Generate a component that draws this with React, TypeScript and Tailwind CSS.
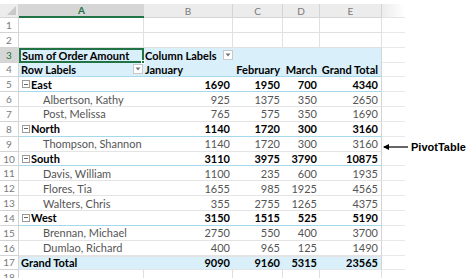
import * as React from "react";

type Kind = "blank" | "head1" | "head2" | "region" | "detail" | "total";

const rows: { n: number; kind: Kind; label?: string; vals?: string[] }[] = [
  { n: 1, kind: "blank" },
  { n: 2, kind: "blank" },
  { n: 3, kind: "head1" },
  { n: 4, kind: "head2", label: "Row Labels", vals: ["January", "February", "March", "Grand Total"] },
  { n: 5, kind: "region", label: "East", vals: ["1690", "1950", "700", "4340"] },
  { n: 6, kind: "detail", label: "Albertson, Kathy", vals: ["925", "1375", "350", "2650"] },
  { n: 7, kind: "detail", label: "Post, Melissa", vals: ["765", "575", "350", "1690"] },
  { n: 8, kind: "region", label: "North", vals: ["1140", "1720", "300", "3160"] },
  { n: 9, kind: "detail", label: "Thompson, Shannon", vals: ["1140", "1720", "300", "3160"] },
  { n: 10, kind: "region", label: "South", vals: ["3110", "3975", "3790", "10875"] },
  { n: 11, kind: "detail", label: "Davis, William", vals: ["1100", "235", "600", "1935"] },
  { n: 12, kind: "detail", label: "Flores, Tia", vals: ["1655", "985", "1925", "4565"] },
  { n: 13, kind: "detail", label: "Walters, Chris", vals: ["355", "2755", "1265", "4375"] },
  { n: 14, kind: "region", label: "West", vals: ["3150", "1515", "525", "5190"] },
  { n: 15, kind: "detail", label: "Brennan, Michael", vals: ["2750", "550", "400", "3700"] },
  { n: 16, kind: "detail", label: "Dumlao, Richard", vals: ["400", "965", "125", "1490"] },
  { n: 17, kind: "total", label: "Grand Total", vals: ["9090", "9160", "5315", "23565"] },
  { n: 18, kind: "blank" },
];

// widths of B, C, D, E
const valWidths = ["w-[89px]", "w-[50px]", "w-[37px]", "w-[62px]"];

const Dropdown = () => (
  <span className="w-[10px] h-[10px] shrink-0 border border-[#c8c8c8] bg-white flex items-center justify-center">
    <svg width="6" height="4" viewBox="0 0 6 4">
      <path d="M0.5 0.5 L5.5 0.5 L3 3.5 Z" fill="#777" />
    </svg>
  </span>
);

const Collapse = () => (
  <span className="w-[8px] h-[8px] border border-[#9a9a9a] flex items-center justify-center mr-[1px] shrink-0">
    <span className="w-[4px] h-px bg-[#666]" />
  </span>
);

export default function App() {
  return (
    <div className="w-[474px] h-[278px] bg-white overflow-hidden pt-[4px] text-[11px] leading-none whitespace-nowrap font-['Lato','Open_Sans',sans-serif]">
      {/* column headers */}
      <div className="flex h-[14px] text-[#7a7a7a] text-[10px]">
        <div className="w-[19px] bg-[#ececec] border-r border-b border-[#d4d4d4] flex items-end justify-end p-[2px]">
          <svg width="9" height="9" viewBox="0 0 9 9">
            <path d="M9 0 L9 9 L0 9 Z" fill="#c9c9c9" />
          </svg>
        </div>
        <div className="w-[125px] bg-[#d6d6d6] border-b-2 border-[#217346] text-[#217346] font-bold flex items-center justify-center">A</div>
        {["B", "C", "D", "E"].map((c, i) => (
          <div key={c} className={`${valWidths[i]} bg-[#ececec] border-r border-b border-[#d4d4d4] flex items-center justify-center`}>
            {c}
          </div>
        ))}
        <div className="w-[23px] bg-gradient-to-r from-[#ececec] to-white border-b border-[#e4e4e4]" />
      </div>

      {rows.map((r) => {
        const bold = r.kind !== "detail" && r.kind !== "blank";
        const blue = r.kind === "head1" || r.kind === "head2" || r.kind === "total";
        const rowBorder =
          r.kind === "region" || r.kind === "head2"
            ? "border-b border-[#a6d8ec]"
            : "border-b border-[#e4e4e4]";
        const sel = r.n === 3;
        return (
          <div key={r.n} className="flex h-[14.85px]">
            <div
              className={`w-[19px] shrink-0 border-r border-b border-[#d4d4d4] flex items-center justify-center text-[10px] ${
                sel ? "bg-[#d6d6d6] text-[#217346]" : "text-[#7a7a7a]"
              }`}
            >
              {r.n}
            </div>

            {r.kind === "blank" ? (
              <>
                <div className="w-[125px] border-r border-b border-[#e0e0e0]" />
                {valWidths.map((w, i) => (
                  <div key={i} className={`${w} border-r border-b border-[#e0e0e0]`} />
                ))}
                <div className="w-[23px] border-b border-[#e8e8e8]" />
              </>
            ) : r.kind === "head1" ? (
              <>
                <div className="w-[125px] relative bg-[#d9eff9] border-2 border-[#217346] font-bold text-black flex items-center pl-[1px]">
                  Sum of Order Amount
                  <span className="absolute right-[-3px] bottom-[-3px] w-[4px] h-[4px] bg-[#217346] border border-white" />
                </div>
                <div className="w-[89px] bg-[#d9eff9] font-bold text-black flex items-center justify-between pl-[1px] pr-0">
                  Column Labels
                  <Dropdown />
                </div>
                <div className="w-[149px] bg-[#d9eff9] border-r border-[#d4d4d4]" />
                <div className="w-[23px] border-b border-[#e8e8e8]" />
              </>
            ) : (
              <>
                <div
                  className={`w-[125px] flex items-center ${rowBorder} ${blue ? "bg-[#d9eff9]" : ""} ${
                    r.kind === "total" ? "border-t border-[#a6d8ec]" : ""
                  } ${bold ? "font-bold text-black" : "text-[#555]"} ${
                    r.kind === "detail" ? "pl-[24px]" : r.kind === "region" ? "pl-[3px]" : "pl-[2px]"
                  } ${r.kind === "head2" ? "justify-between pr-[1px]" : ""}`}
                >
                  {r.kind === "region" && <Collapse />}
                  <span>{r.label}</span>
                  {r.kind === "head2" && <Dropdown />}
                </div>
                {r.vals!.map((v, i) => (
                  <div
                    key={i}
                    className={`${valWidths[i]} flex items-center justify-end pr-[3px] ${rowBorder} ${
                      i === 3 ? "border-r border-r-[#d4d4d4]" : ""
                    } ${blue ? "bg-[#d9eff9]" : ""} ${r.kind === "total" ? "border-t border-[#a6d8ec]" : ""} ${
                      bold ? "font-bold text-black" : "text-[#555]"
                    } ${r.kind === "head2" && i === 0 ? "justify-start pl-[1px]" : ""}`}
                  >
                    {v}
                  </div>
                ))}
                {r.n === 9 ? (
                  <div className="relative top-[3px] flex items-center pl-[1px] font-['Liberation_Sans',sans-serif] font-bold text-[11px] text-black">
                    <svg width="25" height="8" viewBox="0 0 25 8">
                      <path d="M1 4 L25 4" stroke="#000" strokeWidth="1.2" />
                      <path d="M0 4 L6 1 L6 7 Z" fill="#000" />
                    </svg>
                    <span className="ml-[3px]">PivotTable</span>
                  </div>
                ) : (
                  <div className="w-[23px] border-b border-[#e8e8e8]" />
                )}
              </>
            )}
          </div>
        );
      })}
    </div>
  );
}
